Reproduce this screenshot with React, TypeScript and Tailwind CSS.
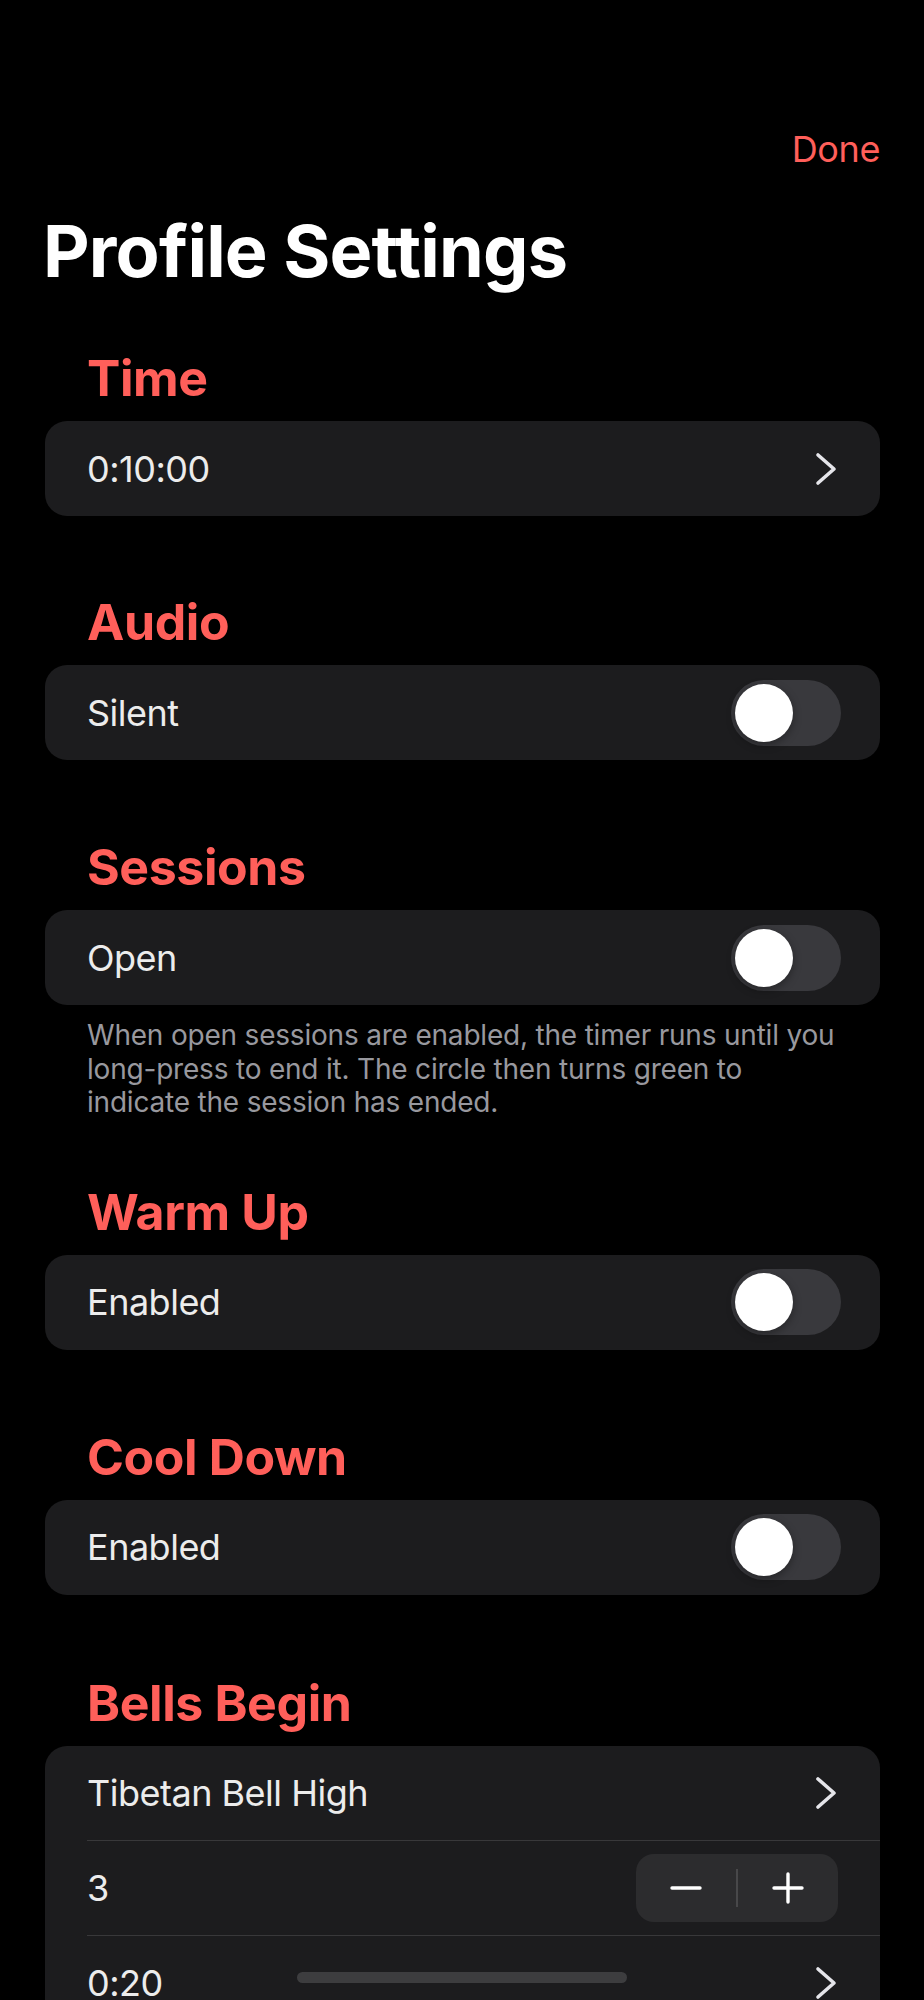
import { useState } from "react"

const font = { fontFamily: "Inter, 'Liberation Sans', sans-serif" }

function Chevron() {
  return (
    <svg width="24" height="34" viewBox="0 0 24 34" fill="none" className="shrink-0 mr-[2px]">
      <path d="M3 3 L19 17 L3 31" stroke="#e5e5ea" strokeWidth="3.6" strokeLinecap="round" strokeLinejoin="round" />
    </svg>
  )
}

function Toggle({ on, onChange }: { on: boolean; onChange: () => void }) {
  return (
    <button
      onClick={onChange}
      className={`relative w-[110px] h-[66px] rounded-full shrink-0 ${on ? "bg-[#30d158]" : "bg-[#39393d]"}`}
    >
      <span
        className={`absolute top-[4px] h-[58px] w-[58px] rounded-full bg-white shadow-[0_3px_8px_rgba(0,0,0,0.35)] ${on ? "left-[48px]" : "left-[4px]"}`}
      />
    </button>
  )
}

function SectionHeader({ title, className }: { title: string; className?: string }) {
  return (
    <h2 className={`pl-[42px] text-[50px] leading-[56px] font-bold text-[#ff5f5a] tracking-[-0.4px] ${className ?? ""}`}>
      {title}
    </h2>
  )
}

function Card({ children }: { children: React.ReactNode }) {
  return <div className="mt-[15px] rounded-[22px] bg-[#1c1c1e] overflow-hidden">{children}</div>
}

function Row({ children, divider }: { children: React.ReactNode; divider?: boolean }) {
  return (
    <div className="pl-[42px]">
      <div className={`h-[95px] flex items-center justify-between pr-[39px] ${divider ? "border-b-[1.5px] border-[#38383a]" : ""}`}>
        {children}
      </div>
    </div>
  )
}

export default function App() {
  const [silent, setSilent] = useState(false)
  const [open, setOpen] = useState(false)
  const [warm, setWarm] = useState(false)
  const [cool, setCool] = useState(false)
  const [count, setCount] = useState(3)

  return (
    <div className="relative bg-black h-[2000px] overflow-hidden text-white" style={font}>
      <div className="px-[44px] pl-[45px]">
        {/* nav */}
        <div className="pt-[127px] flex justify-end">
          <button className="text-[36px] leading-[44px] text-[#ff5f5a] tracking-[-0.4px]">Done</button>
        </div>
        <h1 className="mt-[39px] -ml-[2px] text-[72px] leading-[82px] font-bold tracking-[-0.8px]">Profile Settings</h1>

        {/* Time */}
        <SectionHeader title="Time" className="mt-[58px]" />
        <Card>
          <Row>
            <span className="text-[36px] tracking-[-0.5px] text-[#ececec]">0:10:00</span>
            <Chevron />
          </Row>
        </Card>

        {/* Audio */}
        <SectionHeader title="Audio" className="mt-[78px]" />
        <Card>
          <Row>
            <span className="text-[36px] tracking-[-0.5px] text-[#ececec]">Silent</span>
            <Toggle on={silent} onChange={() => setSilent(!silent)} />
          </Row>
        </Card>

        {/* Sessions */}
        <SectionHeader title="Sessions" className="mt-[79px]" />
        <Card>
          <Row>
            <span className="text-[36px] tracking-[-0.5px] text-[#ececec]">Open</span>
            <Toggle on={open} onChange={() => setOpen(!open)} />
          </Row>
        </Card>
        <p className="mt-[14px] pl-[42px] pr-[30px] text-[28px] leading-[33.5px] text-[#98989e] tracking-[-0.2px]">
          When open sessions are enabled, the timer runs until you long-press to end it. The circle then turns green to
          indicate the session has ended.
        </p>

        {/* Warm Up */}
        <SectionHeader title="Warm Up" className="mt-[64px]" />
        <Card>
          <Row>
            <span className="text-[36px] tracking-[-0.5px] text-[#ececec]">Enabled</span>
            <Toggle on={warm} onChange={() => setWarm(!warm)} />
          </Row>
        </Card>

        {/* Cool Down */}
        <SectionHeader title="Cool Down" className="mt-[79px]" />
        <Card>
          <Row>
            <span className="text-[36px] tracking-[-0.5px] text-[#ececec]">Enabled</span>
            <Toggle on={cool} onChange={() => setCool(!cool)} />
          </Row>
        </Card>

        {/* Bells Begin */}
        <SectionHeader title="Bells Begin" className="mt-[80px]" />
        <Card>
          <Row divider>
            <span className="text-[36px] tracking-[-0.5px] text-[#ececec]">Tibetan Bell High</span>
            <Chevron />
          </Row>
          <Row divider>
            <span className="text-[36px] tracking-[-0.5px] text-[#ececec]">{count}</span>
            <div className="flex items-center h-[68px] w-[202px] rounded-[18px] bg-[#2c2c2e] mr-[3px]">
              <button onClick={() => setCount(Math.max(0, count - 1))} className="flex-1 h-full flex items-center justify-center">
                <svg width="32" height="32" viewBox="0 0 32 32">
                  <path d="M2 16 H30" stroke="#fff" strokeWidth="3.4" strokeLinecap="round" />
                </svg>
              </button>
              <div className="w-[2px] h-[38px] bg-[#48484a]" />
              <button onClick={() => setCount(count + 1)} className="flex-1 h-full flex items-center justify-center">
                <svg width="32" height="32" viewBox="0 0 32 32">
                  <path d="M2 16 H30 M16 2 V30" stroke="#fff" strokeWidth="3.4" strokeLinecap="round" />
                </svg>
              </button>
            </div>
          </Row>
          <Row>
            <span className="text-[36px] tracking-[-0.5px] text-[#ececec]">0:20</span>
            <Chevron />
          </Row>
        </Card>
      </div>

      {/* home indicator */}
      <div className="absolute left-[297px] top-[1972px] w-[330px] h-[11px] rounded-full bg-[#3d3d3f]" />
    </div>
  )
}
